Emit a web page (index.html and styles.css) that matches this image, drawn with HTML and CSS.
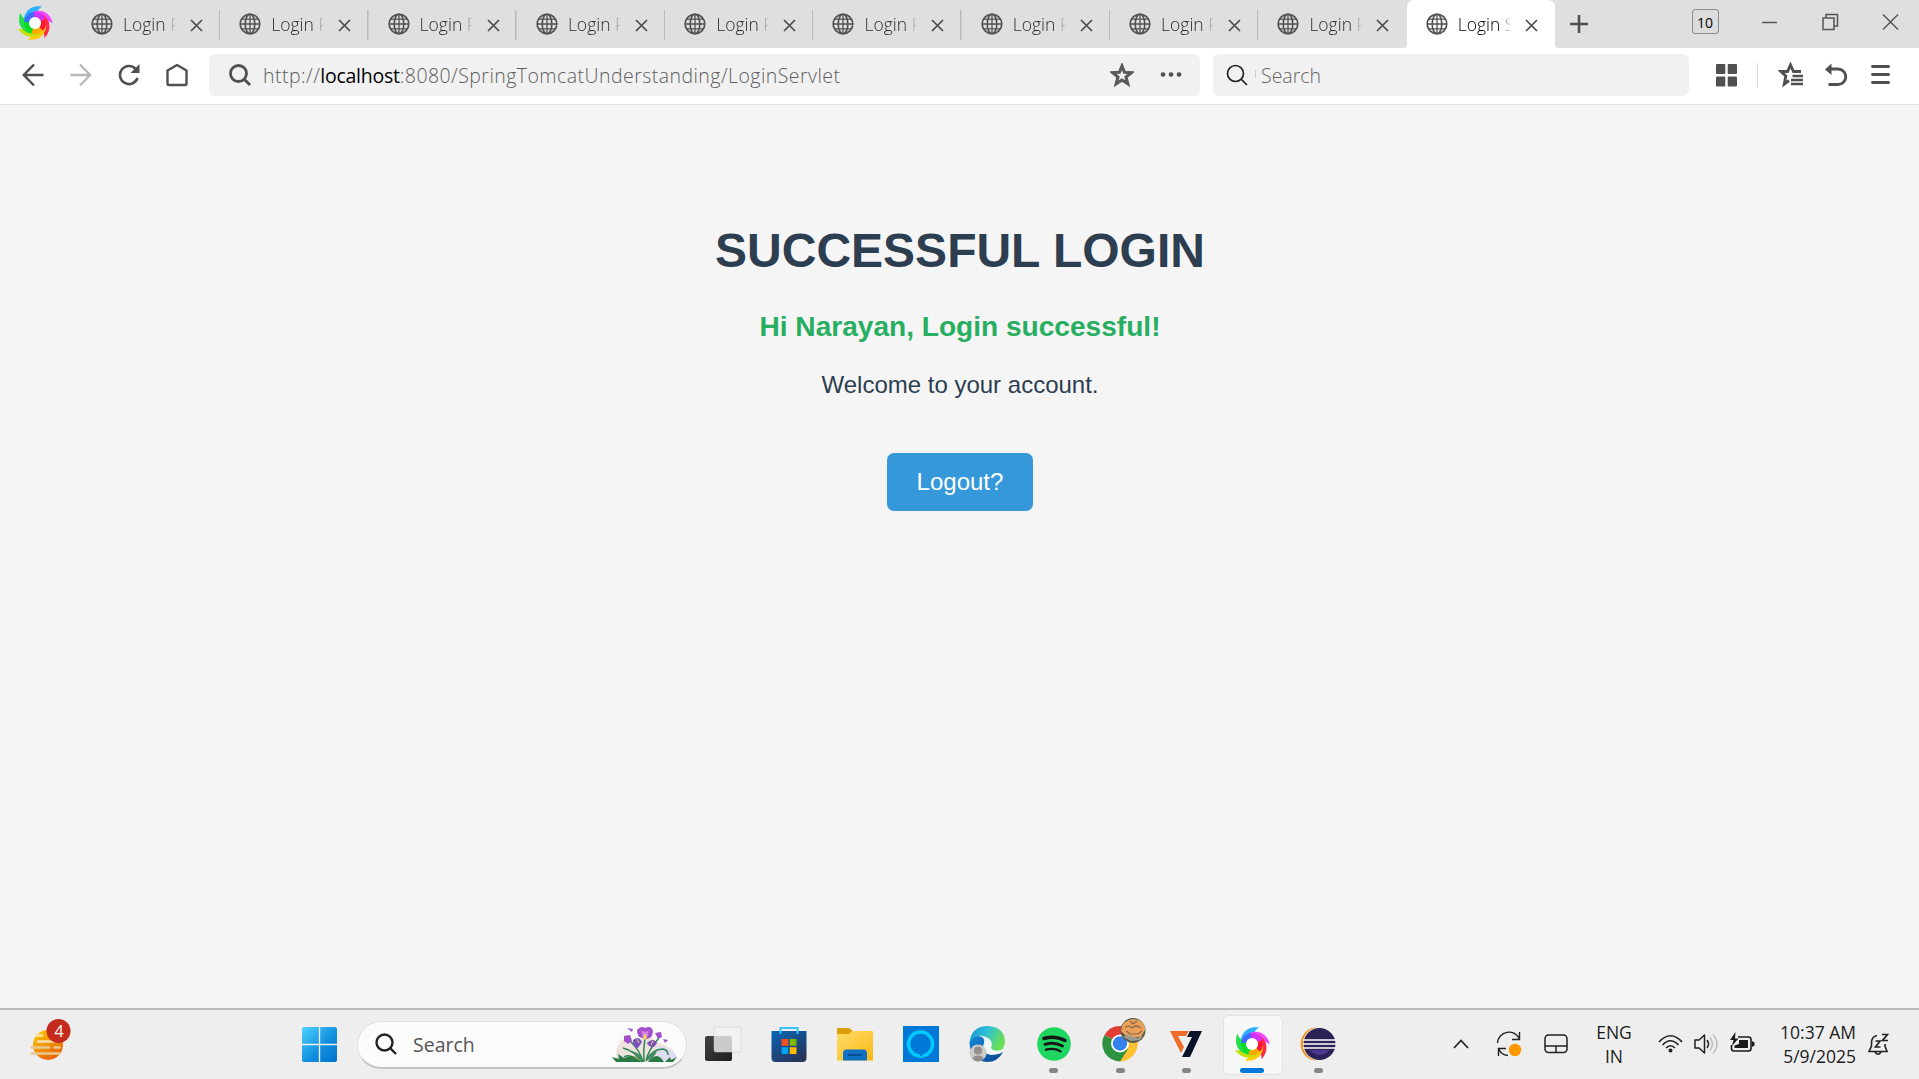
FILE: index.html
```html
<!DOCTYPE html>
<html lang="en">
<head>
<meta charset="utf-8">
<title>Login Success</title>
<link rel="stylesheet" href="styles.css">
</head>
<body>
<svg class="sprite" aria-hidden="true">
  <defs>
    <linearGradient id="win" x1="0" y1="0" x2="1" y2="1"><stop offset="0" stop-color="#4fd3fd"/><stop offset=".55" stop-color="#1290e0"/><stop offset="1" stop-color="#0072cf"/></linearGradient>
    <linearGradient id="sun" x1="0" y1="0" x2=".6" y2="1"><stop offset="0" stop-color="#fdd000"/><stop offset="1" stop-color="#e9620c"/></linearGradient>
    <linearGradient id="store" x1="0" y1="0" x2=".6" y2="1"><stop offset="0" stop-color="#0a66b8"/><stop offset="1" stop-color="#27355c"/></linearGradient>
    <linearGradient id="folder" x1="0" y1="0" x2="1" y2="1"><stop offset="0" stop-color="#ffdd6a"/><stop offset="1" stop-color="#fcb714"/></linearGradient>
    <linearGradient id="edgeTop" x1="0" y1="0" x2="1" y2=".4"><stop offset="0" stop-color="#1a8fd1"/><stop offset=".5" stop-color="#2fc0d6"/><stop offset="1" stop-color="#68df55"/></linearGradient>
    <linearGradient id="edgeLow" x1="0" y1="0" x2="1" y2="1"><stop offset="0" stop-color="#1287d8"/><stop offset="1" stop-color="#0d4590"/></linearGradient>
    <linearGradient id="dark" x1="0" y1="0" x2="1" y2="1"><stop offset="0" stop-color="#444"/><stop offset="1" stop-color="#1c1c1c"/></linearGradient>
    <filter id="soft" x="-20%" y="-20%" width="140%" height="140%"><feGaussianBlur stdDeviation=".65"/></filter>
    <path id="petal" d="M8 21C4 11 11 -.5 25 1.500C20.500 4.500 19 8 20 12.500C14.500 12 12 15.500 12.500 21Z"/>
  </defs>
  <symbol id="swirl" viewBox="0 0 36 36">
    <g filter="url(#soft)">
      <use href="#petal" fill="#2bb0ff"/>
      <use href="#petal" fill="#ee48ff" transform="rotate(68 18 18)"/>
      <use href="#petal" fill="#ff2c48" transform="rotate(125 18 18)"/>
      <use href="#petal" fill="#ffcb00" transform="rotate(180 18 18)"/>
      <use href="#petal" fill="#c5e000" transform="rotate(228 18 18)"/>
      <use href="#petal" fill="#22e04c" transform="rotate(282 18 18)"/>
      <path d="M9.500 18A8.500 8.500 0 0 1 18 9.500" fill="none" stroke="#3a6cff" stroke-width="5"/>
      <path d="M17 9.500A8.500 8.500 0 0 1 26 15" fill="none" stroke="#d230ff" stroke-width="5"/>
      <path d="M26 15A8.500 8.500 0 0 1 24 24" fill="none" stroke="#ff1838" stroke-width="5"/>
      <path d="M24 24A8.500 8.500 0 0 1 15 26" fill="none" stroke="#ffa800" stroke-width="5"/>
      <path d="M15 26A8.500 8.500 0 0 1 9.500 17" fill="none" stroke="#0edc28" stroke-width="5"/>
      <circle cx="18" cy="18" r="6" fill="#fff"/>
    </g>
  </symbol>
  <symbol id="globe" viewBox="0 0 22 22"><g fill="none" stroke="#505050" stroke-width="1.600"><circle cx="11" cy="11" r="9.800"/><ellipse cx="11" cy="11" rx="4.800" ry="9.800"/><path d="M1.200 11H20.800M2.500 6.200H19.500M2.500 15.800H19.500M11 1.200V20.800" stroke-width="1.300"/></g></symbol>
  <symbol id="x" viewBox="0 0 13 13"><path d="M1 1L12 12M12 1L1 12" fill="none" stroke="#4c4c4c" stroke-width="1.700"/></symbol>
  <symbol id="lens" viewBox="0 0 22 22"><circle cx="9.500" cy="9.500" r="8" fill="none" stroke="currentColor"/><path d="M15 15L21 21" stroke="currentColor"/></symbol>
</svg>

<header class="tabs">
  <svg class="brand"><use href="#swirl"/></svg>
  <div class="tab"><svg class="globe"><use href="#globe"/></svg><span class="name">Login Page</span><svg class="x"><use href="#x"/></svg></div>
  <div class="tab"><svg class="globe"><use href="#globe"/></svg><span class="name">Login Page</span><svg class="x"><use href="#x"/></svg></div>
  <div class="tab"><svg class="globe"><use href="#globe"/></svg><span class="name">Login Page</span><svg class="x"><use href="#x"/></svg></div>
  <div class="tab"><svg class="globe"><use href="#globe"/></svg><span class="name">Login Page</span><svg class="x"><use href="#x"/></svg></div>
  <div class="tab"><svg class="globe"><use href="#globe"/></svg><span class="name">Login Page</span><svg class="x"><use href="#x"/></svg></div>
  <div class="tab"><svg class="globe"><use href="#globe"/></svg><span class="name">Login Page</span><svg class="x"><use href="#x"/></svg></div>
  <div class="tab"><svg class="globe"><use href="#globe"/></svg><span class="name">Login Page</span><svg class="x"><use href="#x"/></svg></div>
  <div class="tab"><svg class="globe"><use href="#globe"/></svg><span class="name">Login Page</span><svg class="x"><use href="#x"/></svg></div>
  <div class="tab last"><svg class="globe"><use href="#globe"/></svg><span class="name">Login Page</span><svg class="x"><use href="#x"/></svg></div>
  <div class="tab active"><svg class="globe"><use href="#globe"/></svg><span class="name">Login Success</span><svg class="x"><use href="#x"/></svg></div>
  <svg class="plus" width="18" height="18" viewBox="0 0 18 18"><path d="M9 0V18M0 9H18" stroke="#505050" stroke-width="2.600"/></svg>
  <div class="window">
    <span class="count">10</span>
    <svg width="16" height="18" viewBox="0 0 16 18"><path d="M0 9.500H15" stroke="#555" stroke-width="1.500"/></svg>
    <svg width="17" height="18" viewBox="0 0 17 18"><g fill="none" stroke="#555" stroke-width="1.500"><path d="M1 5H12V16.500H1Z"/><path d="M4 5V1.500H15.500V13H12"/></g></svg>
    <svg width="17" height="18" viewBox="0 0 17 18"><path d="M1 1.500L16 16.500M16 1.500L1 16.500" stroke="#555" stroke-width="1.500"/></svg>
  </div>
</header>

<nav class="toolbar">
  <div class="navicons">
    <svg width="22" height="24" viewBox="0 0 22 24"><path d="M12 1.500L1.800 12L12 22.500M2 12H21.500" fill="none" stroke="#505050" stroke-width="2.500"/></svg>
    <svg width="22" height="24" viewBox="0 0 22 24"><path d="M10 1.500L20.200 12L10 22.500M20 12H.5" fill="none" stroke="#b8b8b8" stroke-width="2.300"/></svg>
    <svg width="22" height="24" viewBox="0 0 22 24"><path d="M17.500 5.800A9 9 0 1 0 19.500 15" fill="none" stroke="#505050" stroke-width="2.600"/><path d="M21.500 1V10H12.500Z" fill="#505050"/></svg>
    <svg width="22" height="24" viewBox="0 0 22 24"><path d="M1.500 7.500L11 2L20.500 7.500V20.500Q20.500 22 19 22H3Q1.500 22 1.500 20.500Z" fill="none" stroke="#505050" stroke-width="2.400" stroke-linejoin="round"/></svg>
  </div>
  <div class="field url">
    <svg class="lens bold"><use href="#lens"/></svg>
    <span class="address">http://<b>localhost</b>:8080/SpringTomcatUnderstanding/LoginServlet</span>
    <svg class="star" width="24" height="24" viewBox="0 0 24 24"><path d="M12 3L14.500 9.300L21.300 9.700L16 14L17.800 20.800L12 17L6.200 20.800L8 14L2.700 9.700L9.500 9.300Z" fill="none" stroke="#5a5a5a" stroke-width="3.100"/></svg>
    <svg width="22" height="24" viewBox="0 0 22 24"><g fill="#505050"><circle cx="3" cy="11.500" r="2.300"/><circle cx="11" cy="11.500" r="2.300"/><circle cx="19" cy="11.500" r="2.300"/></g></svg>
  </div>
  <div class="field find">
    <svg class="lens"><use href="#lens"/></svg><i></i><span>Search</span>
  </div>
  <div class="tools">
    <svg width="21" height="24" viewBox="0 0 21 24"><g fill="#505050"><rect y="1" width="9.300" height="10" rx="1"/><rect x="11.700" y="1" width="9.300" height="10" rx="1"/><rect y="13.500" width="9.300" height="10" rx="1"/><rect x="11.700" y="13.500" width="9.300" height="10" rx="1"/></g></svg>
    <i></i>
    <svg width="25" height="26" viewBox="0 0 25 26"><path d="M23 9.500H15.500L12.500 3L9.500 9.500H3L7.800 14L6.300 22L11 18.500" fill="none" stroke="#505050" stroke-width="2.900"/><path d="M14.500 14H25M13 18H25M13 22H25" stroke="#505050" stroke-width="2.400"/></svg>
    <svg width="22" height="24" viewBox="0 0 22 24"><path d="M5 6H13A7.500 7.500 0 0 1 13 21.500H3.500" fill="none" stroke="#505050" stroke-width="2.800"/><path d="M6.500 .5V12L0 6.500Z" fill="#505050"/></svg>
    <svg width="19" height="24" viewBox="0 0 19 24"><path d="M1.500 3.500H17.500M1.500 11.500H17.500M1.500 19.500H17.500" stroke="#505050" stroke-width="2.900" stroke-linecap="round"/></svg>
  </div>
</nav>

<main class="page">
  <h1>SUCCESSFUL LOGIN</h1>
  <h3>Hi Narayan, Login successful!</h3>
  <p>Welcome to your account.</p>
  <a class="logout">Logout?</a>
</main>

<footer class="taskbar">
  <div class="weather">
    <svg width="42" height="50" viewBox="0 -2 42 50"><circle cx="18" cy="27" r="15" fill="url(#sun)"/><g stroke="#f6e3b0" stroke-width="2.600" stroke-linecap="round"><path d="M6 17.500H12M8 23.500H26" /><path d="M1.500 29.500H19M24.500 29.500H29.500M1.500 35.500H29.500" stroke="#e8c98d"/></g><circle cx="28.500" cy="13" r="12" fill="#c42b1c"/></svg>
    <span>4</span>
  </div>
  <svg class="start" width="35" height="35" viewBox="0 0 35 35"><path d="M2 0H16.800V16.800H0V2Q0 0 2 0ZM18.200 0H33Q35 0 35 2V16.800H18.200ZM0 18.200H16.800V35H2Q0 35 0 33ZM18.200 18.200H35V33Q35 35 33 35H18.200Z" fill="url(#win)"/></svg>
  <div class="search">
    <svg class="lens"><use href="#lens"/></svg><span>Search</span>
    <svg class="iris" width="66" height="37" viewBox="0 0 66 37">
      <path d="M4 36Q3 23 8 16Q15 8 25 18Q35 5 47 17Q61 21 65 31L59 36Z" fill="#f0e2dc"/>
      <path d="M44 21Q57 18 65 31L59 36H47Z" fill="#dedaf1"/>
      <path d="M12 36Q22 24 32 36Z" fill="#bfae55"/>
      <g fill="none" stroke="#2c8654" stroke-width="1.500"><path d="M32 36Q31 24 33 12M31 36Q28 24 17 14M34 35Q36 24 47 12M30 36Q23 25 11 22M35 34Q40 23 51 23Q56 24 56 29M28 36Q18 27 12 31M37 35Q45 30 50 36"/></g>
      <path d="M4 36L0 31L7 33L6 28L12 32L18 30L29 36ZM36 36Q45 24 52 36ZM53 36L58 31L59 34L65 31L61 36Z" fill="#297b43"/>
      <path d="M32 36Q24 32 20 25Q29 27 32 36ZM34 35Q36 28 45 25Q43 32 34 35Z" fill="#458e65"/>
      <g fill="#a34fcb"><path d="M25 4Q29-1 33 2Q39-1 41 5L40 10Q36 15 30 12Q25 11 25 4Z"/><path d="M12 10L18 9L20 15L16 18L12 15ZM43 7L49 6L50 11L46 13ZM51 13L56 14L53 17ZM15 2L21 3L20 6Z"/></g>
      <g fill="#7852c1"><path d="M21 14Q27 9 30 16L26 22Q20 21 21 14ZM35 17Q41 11 45 17L42 21Q36 21 35 17Z"/></g>
      <path d="M29 4Q33 7 37 4L35 12H31Z" fill="#cf82e0"/><path d="M32 9L34 9L34 13L32 13ZM25 13L27 17M41 15L39 19" fill="#ffd550" stroke="#ffd550"/>
    </svg>
  </div>
  <div class="apps">
    <div class="app"><svg width="37" height="36" viewBox="0 0 37 36"><rect y="10" width="27" height="25" rx="2" fill="url(#dark)"/><rect x="9" y="1" width="27" height="25" rx="2" fill="#f2f2f2" fill-opacity=".8" stroke="#ccc" stroke-opacity=".5"/></svg></div>
    <div class="app"><svg width="36" height="36" viewBox="0 0 36 36"><path d="M.500 5H35.500V32Q35.500 36 31.500 36H4.500Q.500 36 .500 32Z" fill="url(#store)"/><path d="M9.500 8V2H26.500V8" fill="none" stroke="#35c4f5" stroke-width="2"/><path d="M10.500 13H17.300V19.800H10.500Z" fill="#f25022"/><path d="M18.700 13H25.500V19.800H18.700Z" fill="#7fba00"/><path d="M10.500 21.200H17.300V28H10.500Z" fill="#00a4ef"/><path d="M18.700 21.200H25.500V28H18.700Z" fill="#ffb900"/></svg></div>
    <div class="app"><svg width="36" height="36" viewBox="0 0 36 36"><path d="M0 3Q0 2 1 2H12L16 5L13 9H0Z" fill="#dc9d08"/><path d="M0 8H12L15 5H35Q36 5 36 6V34.500H0Z" fill="url(#folder)"/><path d="M6 34.500V27Q6 23.500 9.500 23.500H26.500Q30 23.500 30 27V34.500Z" fill="#0f70c4"/><path d="M11 29H25" stroke="#094d91" stroke-width="2"/></svg></div>
    <div class="app"><svg width="36" height="36" viewBox="0 0 36 36"><path d="M0 0H36V36H0Z" fill="#0078d7"/><path d="M16.500 30A12 12 0 1 1 20 29.800" fill="none" stroke="#00caff" stroke-width="3.500"/><path d="M14 28Q17 28 18 31Q19 29 22 28L19 32H16Z" fill="#00caff"/></svg></div>
    <div class="app"><svg width="37" height="36" viewBox="0 0 37 36"><path d="M.500 18Q1 9 8 10Q18 10 14 20Q13 28 22 29Q29 29 34 26Q29 36 18 36Q2 35 .500 18Z" fill="url(#edgeLow)"/><path d="M.500 17Q2 0 19 0Q35 1 36 15Q36 25 27 25Q21 25 22 21Q24 13 17 11Q6 7 .500 17Z" fill="url(#edgeTop)"/><path d="M15 20Q17 13 21 15Q24 18 22 22Q25 26 33 24L32 27Q19 31 15 20Z" fill="#f2f5f5"/><circle cx="9" cy="27" r="8.500" fill="#cdcbc8"/><circle cx="9" cy="24.500" r="4" fill="#918e8c"/><path d="M3.500 33Q4 29.500 9 29.500T14.500 33Q9 38 3.500 33Z" fill="#918e8c"/></svg></div>
    <div class="app running"><svg width="36" height="36" viewBox="0 0 36 36"><circle cx="18" cy="18" r="16.800" fill="#1ed760"/><g fill="none" stroke="#171717" stroke-linecap="round"><path d="M8 12.500Q19 9 29 14.500" stroke-width="3.500"/><path d="M9 18.300Q18.500 15.500 26.500 20" stroke-width="2.900"/><path d="M10 23.700Q18 21.500 24.500 25.200" stroke-width="2.400"/></g></svg></div>
    <div class="app running"><svg class="chrome" width="46" height="44" viewBox="0 0 46 44"><path d="M18 25.500L2.400 17A18 18 0 0 1 33.600 17Z" fill="#e23d33"/><path d="M18 25.500L33.600 17A18 18 0 0 1 18 43.500Z" fill="#fdc02f"/><path d="M18 25.500L26 31L18 43.500A18 18 0 0 1 2.400 17Z" fill="#2d9140"/><circle cx="18" cy="25.500" r="9" fill="#fff"/><circle cx="18" cy="25.500" r="7.200" fill="#3380ee"/><circle cx="31" cy="12.500" r="12.500" fill="#555e46"/><path d="M19 13Q20 2 31 1Q43 2 43 12L39 19H25Z" fill="#eaa25b"/><path d="M23 10Q26 6 30 10Q34 6 39 10M24 13L28 16H36L40 13M28 3L31 6L35 3" fill="none" stroke="#8d6646" stroke-width="1.200"/><path d="M21 19L26 17L36 20L41 18L38 22L29 23Z" fill="#9b9c91"/></svg></div>
    <div class="app running"><svg width="32" height="26" viewBox="0 0 32 26"><path d="M0 0H19L16 5H8L14 16L11 22Z" fill="#ed6d29"/><path d="M20 0H32L20 26H12L22 6H17Z" fill="#0b1329"/></svg></div>
    <div class="app running current"><svg width="36" height="36"><use href="#swirl"/></svg></div>
    <div class="app running"><svg width="37" height="36" viewBox="0 0 37 36"><path d="M16 1.200A17 17 0 0 0 16 34.800" fill="#f7941e"/><circle cx="20.500" cy="18" r="16.700" fill="#eee"/><circle cx="20.500" cy="18" r="16" fill="#2c2255"/><path d="M10 24Q20 34 31 24Z" fill="#4b388c"/><path d="M4 14H37M4 18H37M4 22H37" stroke="#fff" stroke-width="1.700"/></svg></div>
  </div>
  <div class="tray">
    <svg width="16" height="10" viewBox="0 0 16 10"><path d="M1 9L8 1.500L15 9" fill="none" stroke="#222" stroke-width="1.700"/></svg>
    <svg class="sync" width="26" height="26" viewBox="0 0 26 26"><g fill="none" stroke="#222" stroke-width="1.400"><path d="M1.500 12A11.500 11.500 0 0 1 23.500 8M23.500 1V8.500H16M12 24.500Q5 24 2.500 17.500M2.500 25V17.500H10"/></g><circle cx="19" cy="19" r="6.200" fill="#ff9800"/></svg>
    <svg class="pad" width="24" height="20" viewBox="0 0 24 20"><g fill="none" stroke="#222" stroke-width="1.500"><rect x="1" y="1" width="22" height="17.500" rx="3.500"/><path d="M1 12H23M12 12V18"/></g></svg>
    <div class="lang">ENG<br>IN</div>
    <svg class="wifi" width="25" height="20" viewBox="0 0 25 20"><g fill="none" stroke="#222" stroke-width="1.700"><path d="M1 8Q12.500-4.500 24 8M4.500 11Q12.500 2.500 20.500 11M8 14Q12.500 9.500 17 14"/></g><circle cx="12.500" cy="16.500" r="2" fill="#222"/></svg>
    <svg class="volume" width="25" height="22" viewBox="0 0 25 22"><path d="M1 7H5L10.500 2V20L5 15H1Z" fill="none" stroke="#222" stroke-width="1.500" stroke-linejoin="round"/><path d="M13 7Q16 11 13 15" fill="none" stroke="#222" stroke-width="1.500"/><path d="M16 4.500Q21 11 16 17.500M19 1.500Q27 11 19 20.500" fill="none" stroke="#bcbcbc" stroke-width="1.500"/></svg>
    <svg class="battery" width="25" height="21" viewBox="0 0 25 21"><path d="M8 5H18.500Q21 5 21 7.500V16.500Q21 19 18.500 19H4Q1.500 19 1.500 16.500V13" fill="none" stroke="#1a1a1a" stroke-width="1.600"/><path d="M9 8H18V16H4.500V13.500L9 12Z" fill="#1a1a1a"/><path d="M22 9L24.500 10.500V13.500L22 15ZM5.500 0L0 8H3.500L2 14L8.500 6.500H5Z" fill="#1a1a1a"/></svg>
    <div class="clock">10:37 AM<br>5/9/2025</div>
    <div class="bell"><svg width="21" height="24" viewBox="0 0 21 24"><path d="M9 3.500Q3.500 4.500 3.500 11V14L1 19.500H19L17 14V12M7 20Q10 24.500 13 20" fill="none" stroke="#222" stroke-width="1.600"/><path d="M7.500 9H12L7.500 15H12.500M14 2.500H19.500L14.500 8.500H20" fill="none" stroke="#222" stroke-width="1.700"/></svg></div>
  </div>
</footer>
</body>
</html>
```
FILE: styles.css
```css
* { box-sizing: border-box; }
body {
  margin: 0;
  height: 1079px;
  display: flex;
  flex-direction: column;
  overflow: hidden;
  background: #f5f5f5;
  font-family: "Open Sans", "Noto Sans", sans-serif;
}
svg { display: block; flex: none; }
.sprite { position: absolute; width: 0; height: 0; }

/* Tab strip */
.tabs { display: flex; height: 48px; flex: none; background: #dfdfdf; align-items: center; }
.brand { width: 36px; height: 36px; margin: 0 19px 2px 17px; }
.tab {
  width: 148.3px;
  height: 48px;
  flex: none;
  display: flex;
  align-items: center;
  padding-left: 19px;
  background: linear-gradient(#bababa, #bababa) right 10px / 1.5px 30px no-repeat;
}
.tab.last { background: none; }
.tab.active { position: relative; background: #fff; border-radius: 7px 7px 0 0; }
.active::before, .active::after { content: ""; position: absolute; bottom: 0; width: 4px; height: 4px; }
.active::before { left: -4px; background: radial-gradient(circle at 0 0, transparent 4px, #fff 4.5px); }
.active::after { right: -4px; background: radial-gradient(circle at 100% 0, transparent 4px, #fff 4.5px); }
.globe { width: 22px; height: 22px; }
.name {
  width: 54px;
  margin: 0 13px 0 10px;
  overflow: hidden;
  white-space: nowrap;
  font-size: 17.5px;
  line-height: 28px;
  font-weight: 300;
  color: #2c2c2c;
  mask-image: linear-gradient(90deg, #000 76%, transparent 99%);
}
.active .name { color: #000; }
.x { width: 13px; height: 13px; margin-top: 3px; }
.plus { margin-left: 15px; }
.window { margin-left: auto; display: flex; align-items: center; padding: 0 20px 5px 0; }
.window svg { margin-left: 43.5px; }
.count {
  width: 27px;
  height: 25px;
  border: 1.5px solid #8b8b8b;
  border-radius: 3px;
  font-size: 14px;
  line-height: 25px;
  text-align: center;
  color: #000;
  background: #dcdcdc;
}

/* Navigation bar */
.toolbar { display: flex; align-items: center; height: 57px; flex: none; background: #fff; border-bottom: 1.5px solid #e2e2e2; padding-bottom: 2px; }
.navicons { display: flex; gap: 26px; width: 209px; padding-left: 22px; }
.field { display: flex; align-items: center; height: 42px; background: #f1f1f1; border-radius: 6px; font-size: 19.5px; font-weight: 300; color: #666; }
.url { width: 991px; padding: 0 18px 0 20px; }
.find { width: 476px; margin-left: 13px; padding-left: 13px; }
.lens { width: 22px; height: 22px; color: #222; stroke-width: 1.7px; overflow: visible; }
.lens.bold { color: #505050; stroke-width: 2.8px; }
.address { margin-left: 12px; white-space: nowrap; color: #5e5e5e; letter-spacing: .45px; }
.address b { font-weight: 400; color: #000; letter-spacing: -.25px; }
.star { margin-left: auto; margin-right: 26px; }
.find i { width: 1px; height: 8px; margin: 0 5px 3px 7px; background: #ccc; }
.tools { display: flex; align-items: center; padding-left: 27px; }
.tools i { width: 1px; height: 25px; margin: 0 20px 0 20px; background: #dcdcdc; }
.tools svg + svg { margin-left: 22px; }
.tools svg:last-child { margin-left: 24px; }

/* Page */
.page { flex: 1; text-align: center; padding: 75px 0 0 1px; font-family: "Liberation Sans", Arial, sans-serif; color: #2c3e50; }
h1 { margin: 43px 0 0; font-size: 48px; line-height: 56px; }
h3 { margin: 32px 0 0; font-size: 28.08px; line-height: 32px; color: #27ae60; }
p { margin: 28px 0 0; font-size: 24px; line-height: 28px; }
.logout { display: inline-block; margin-top: 54px; padding: 15px 29.8px; border-radius: 7px; background: #3498db; color: #fff; font-size: 24px; line-height: 28px; }

/* Taskbar */
.taskbar { display: flex; align-items: center; height: 71px; flex: none; background: #eee; border-top: 2px solid #bbb; color: #1c1c1c; }
.weather { position: relative; width: 302px; padding: 0 0 7px 30px; }
.weather span { position: absolute; left: 47px; top: 3px; width: 24px; text-align: center; color: #fff; font-size: 16px; line-height: 24px; }
.search { display: flex; align-items: center; width: 330px; height: 48px; margin-left: 20px; padding: 0 8px 0 17px; border: 1.5px solid #e0e0e0; border-bottom: 2px solid #c5c5c5; border-radius: 24px; background: #fbfbfb; font-size: 19.5px; color: #555; }
.search .lens { stroke-width: 2.4px; }
.search span { margin-left: 16px; }
.iris { margin-left: auto; }
.apps { display: flex; margin-left: 3px; }
.app { position: relative; width: 66.1px; height: 69px; display: flex; align-items: center; justify-content: center; padding-bottom: 1px; }
.running::after { content: ""; position: absolute; left: 29px; bottom: 6px; width: 9px; height: 5px; border-radius: 3px; background: #858585; }
.chrome { margin: 0 0 8px 10px; }
.current::before { content: ""; position: absolute; left: 4px; top: 5px; width: 58px; height: 58px; border: 1.5px solid #e2e2e2; border-radius: 6px; background: #f8f8f8; }
.current svg { position: relative; }
.current::after { left: 21px; width: 24px; background: #0078d7; }
.tray { display: flex; align-items: center; margin-left: auto; padding: 0 30px 2px 0; }
.sync { margin-left: 27px; }
.pad { margin-left: 22px; }
.lang, .clock { font-size: 17.5px; line-height: 24px; white-space: nowrap; }
.lang { width: 40px; margin-left: 26px; text-align: center; }
.wifi { margin-left: 24px; }
.volume { margin-left: 11px; }
.battery { margin: 0 0 3px 11px; }
.clock { width: 90px; margin-left: 11px; text-align: right; }
.bell { margin-left: 12px; }
```
